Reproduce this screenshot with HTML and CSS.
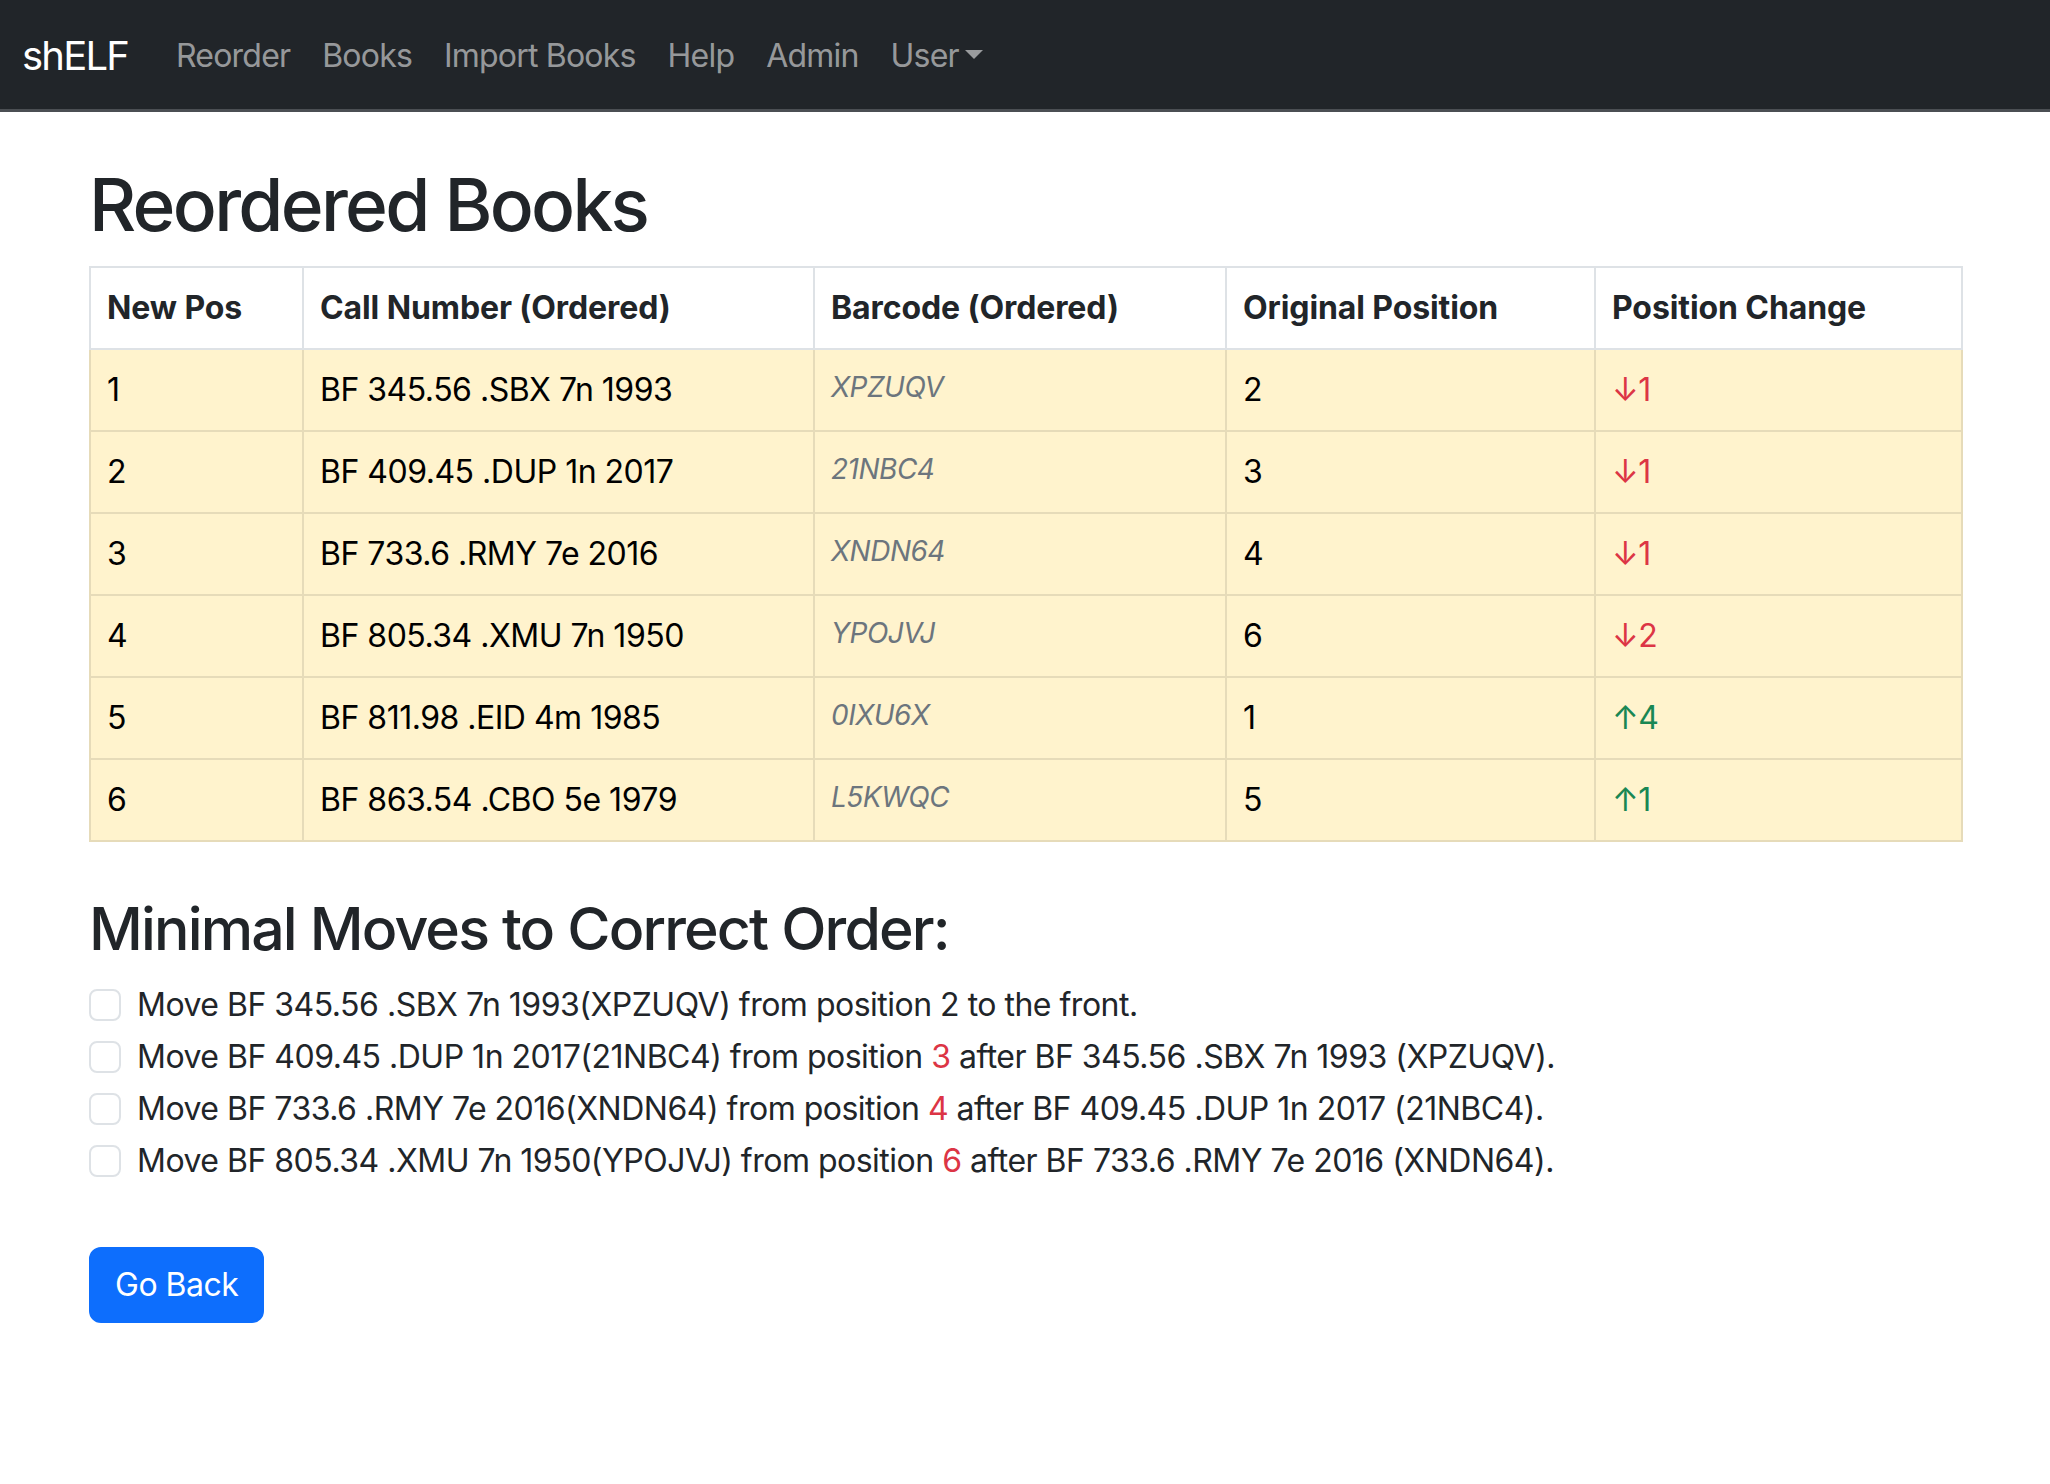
FILE: index.html
```html
<!DOCTYPE html>
<html lang="en">
<head>
<meta charset="utf-8">
<title>shELF - Reordered Books</title>
<link rel="stylesheet" href="styles.css">
</head>
<body>
<nav class="navbar">
  <div class="navbar-inner">
    <a class="brand" href="#">shELF</a>
    <ul class="nav">
      <li><a class="nav-link" href="#">Reorder</a></li>
      <li><a class="nav-link" href="#">Books</a></li>
      <li><a class="nav-link" href="#">Import Books</a></li>
      <li><a class="nav-link" href="#">Help</a></li>
      <li><a class="nav-link" href="#">Admin</a></li>
      <li><a class="nav-link dropdown-toggle" href="#">User</a></li>
    </ul>
  </div>
</nav>
<main class="container">
  <h1 class="title">Reordered Books</h1>
  <table class="books">
    <colgroup>
      <col class="c-pos"><col class="c-call"><col class="c-bar"><col class="c-orig"><col class="c-change">
    </colgroup>
    <thead>
      <tr><th>New Pos</th><th>Call Number (Ordered)</th><th>Barcode (Ordered)</th><th>Original Position</th><th>Position Change</th></tr>
    </thead>
    <tbody>
      <tr><td>1</td><td>BF 345.56 .SBX 7n 1993</td><td class="barcode">XPZUQV</td><td>2</td><td class="down">↓1</td></tr>
      <tr><td>2</td><td>BF 409.45 .DUP 1n 2017</td><td class="barcode">21NBC4</td><td>3</td><td class="down">↓1</td></tr>
      <tr><td>3</td><td>BF 733.6 .RMY 7e 2016</td><td class="barcode">XNDN64</td><td>4</td><td class="down">↓1</td></tr>
      <tr><td>4</td><td>BF 805.34 .XMU 7n 1950</td><td class="barcode">YPOJVJ</td><td>6</td><td class="down">↓2</td></tr>
      <tr><td>5</td><td>BF 811.98 .EID 4m 1985</td><td class="barcode">0IXU6X</td><td>1</td><td class="up">↑4</td></tr>
      <tr><td>6</td><td>BF 863.54 .CBO 5e 1979</td><td class="barcode">L5KWQC</td><td>5</td><td class="up">↑1</td></tr>
    </tbody>
  </table>
  <h2 class="subtitle">Minimal Moves to Correct Order:</h2>
  <div class="moves">
    <div class="form-check"><input class="check" type="checkbox" id="m1"><label for="m1">Move BF 345.56 .SBX 7n 1993(XPZUQV) from position 2 to the front.</label></div>
    <div class="form-check"><input class="check" type="checkbox" id="m2"><label for="m2">Move BF 409.45 .DUP 1n 2017(21NBC4) from position <span class="pos">3</span> after BF 345.56 .SBX 7n 1993 (XPZUQV).</label></div>
    <div class="form-check"><input class="check" type="checkbox" id="m3"><label for="m3">Move BF 733.6 .RMY 7e 2016(XNDN64) from position <span class="pos">4</span> after BF 409.45 .DUP 1n 2017 (21NBC4).</label></div>
    <div class="form-check"><input class="check" type="checkbox" id="m4"><label for="m4">Move BF 805.34 .XMU 7n 1950(YPOJVJ) from position <span class="pos">6</span> after BF 733.6 .RMY 7e 2016 (XNDN64).</label></div>
  </div>
  <a class="btn" href="#">Go Back</a>
</main>
</body>
</html>
```
FILE: styles.css
```css
* { box-sizing: border-box; }

body {
  margin: 0;
  font-family: "Inter", "Roboto", "Liberation Sans", sans-serif;
  font-size: 32px;
  line-height: 1.5;
  color: #212529;
  background: #fff;
}

a { text-decoration: none; }

.navbar {
  background: #212529;
  padding: 16px 0 13px;
  border-bottom: 3px solid #4b4f53;
}

.navbar-inner {
  display: flex;
  align-items: center;
  padding: 0 22px;
}

.brand {
  color: #fff;
  font-size: 40px;
  line-height: 60px;
  padding: 10px 0;
  margin-right: 32px;
  letter-spacing: -1.8px;
}

.nav {
  display: flex;
  list-style: none;
  margin: 0;
  padding: 0;
}

.nav-link {
  display: block;
  padding: 16px 16px;
  color: rgba(255, 255, 255, 0.55);
  letter-spacing: -0.8px;
}

.dropdown-toggle::after {
  content: "";
  display: inline-block;
  margin-left: 6px;
  vertical-align: 8px;
  border-top: 9px solid;
  border-right: 9px solid transparent;
  border-left: 9px solid transparent;
  border-bottom: 0;
}

.container {
  width: 1920px;
  margin: 0 auto;
  padding: 48px 24px 0;
}

.title {
  margin: 0 0 16px;
  font-size: 73px;
  font-weight: 500;
  line-height: 89.7px;
  letter-spacing: -2.7px;
}

.books {
  width: 100%;
  table-layout: fixed;
  border-collapse: collapse;
  margin-bottom: 32px;
  border: 2px solid #dee2e6;
}

.c-pos { width: 213px; }
.c-call { width: 511px; }
.c-bar { width: 412px; }
.c-orig { width: 369px; }
.c-change { width: 367px; }

.books th,
.books td {
  padding: 16px 16px;
  text-align: left;
  vertical-align: top;
  white-space: nowrap;
  letter-spacing: -0.5px;
}

.books th {
  font-weight: 700;
  color: #212529;
  background: #fff;
  border: 2px solid #dee2e6;
  letter-spacing: -0.1px;
}

.books td {
  background: #fff3cd;
  color: #000;
  border: 2px solid #e6dbb9;
}

.books td.barcode {
  font-style: italic;
  color: #6c757d;
  font-size: 28px;
}

.books td.down { color: #dc3545; }
.books td.up { color: #198754; }

.subtitle {
  margin: 50px 0 16px;
  font-size: 59px;
  font-weight: 500;
  line-height: 73px;
  letter-spacing: -1.85px;
}

.moves {
  margin-bottom: 62px;
}

.form-check {
  min-height: 48px;
  padding-left: 48px;
  margin-bottom: 4px;
  letter-spacing: -0.5px;
}

.check {
  appearance: none;
  -webkit-appearance: none;
  float: left;
  width: 32px;
  height: 32px;
  margin: 8px 0 0 -48px;
  border: 2px solid #dee2e6;
  border-radius: 8px;
  background: #fff;
}

.pos { color: #dc3545; }

.btn {
  display: inline-block;
  padding: 12px 24px;
  border: 2px solid #0d6efd;
  border-radius: 12px;
  background: #0d6efd;
  color: #fff;
  font-size: 32px;
  line-height: 48px;
  letter-spacing: -0.5px;
}
```
